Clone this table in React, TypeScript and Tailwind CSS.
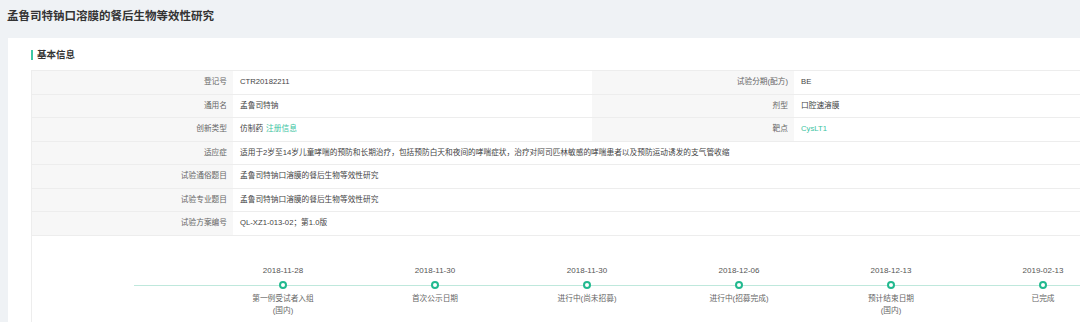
import React from 'react'

const font = { fontFamily: '"Liberation Sans", "Noto Sans CJK SC", sans-serif' }

interface Milestone {
  date: string
  label: string[]
}

const milestones: Milestone[] = [
  { date: '2018-11-28', label: ['第一例受试者入组', '(国内)'] },
  { date: '2018-11-30', label: ['首次公示日期'] },
  { date: '2018-11-30', label: ['进行中(尚未招募)'] },
  { date: '2018-12-06', label: ['进行中(招募完成)'] },
  { date: '2018-12-13', label: ['预计结束日期', '(国内)'] },
  { date: '2019-02-13', label: ['已完成'] },
]

function Label({ children }: { children: React.ReactNode }) {
  return (
    <div className="h-[23.5px] bg-[#f7f7f7] border-b border-[#ededed] flex items-center justify-end pr-[6px] text-[7.7px] text-[#666]">
      {children}
    </div>
  )
}

function Value({ children }: { children: React.ReactNode }) {
  return (
    <div className="h-[23.5px] bg-white border-b border-[#ededed] flex items-center pl-[7px] text-[7.7px] text-[#444] whitespace-nowrap overflow-hidden">
      {children}
    </div>
  )
}

export default function App() {
  return (
    <div className="w-[1080px] h-[322px] overflow-hidden bg-[#eff2f5]" style={font}>
      {/* Title */}
      <div className="h-[38px] flex items-center pl-[7px] pb-[4px]">
        <h1 className="text-[11.5px] font-bold text-[#333] whitespace-nowrap">孟鲁司特钠口溶膜的餐后生物等效性研究</h1>
      </div>

      {/* Card */}
      <div className="ml-[8px] w-[1160px] h-[284px] bg-white pt-[11px] pl-[23px]">
        <div className="h-[12px] flex items-center gap-[4px]">
          <span className="w-[2px] h-[10px] bg-[#3cc8a5]" />
          <span className="text-[9.5px] font-bold text-[#333]">基本信息</span>
        </div>

        <div className="mt-[9px] border-t border-l border-[#ededed] w-[1120px]">
          <div className="grid grid-cols-[201px_359px_202px_1fr]">
            <Label>登记号</Label>
            <Value>CTR20182211</Value>
            <Label>试验分期(配方)</Label>
            <Value>BE</Value>
            <Label>通用名</Label>
            <Value>孟鲁司特钠</Value>
            <Label>剂型</Label>
            <Value>口腔速溶膜</Value>
            <Label>创新类型</Label>
            <Value>
              仿制药<span className="ml-[3px] text-[#3cc4a2]">注册信息</span>
            </Value>
            <Label>靶点</Label>
            <Value>
              <span className="text-[#3cc4a2]">CysLT1</span>
            </Value>
          </div>
          <div className="grid grid-cols-[201px_1fr]">
            <Label>适应症</Label>
            <Value>适用于2岁至14岁儿童哮喘的预防和长期治疗，包括预防白天和夜间的哮喘症状，治疗对阿司匹林敏感的哮喘患者以及预防运动诱发的支气管收缩</Value>
            <Label>试验通俗题目</Label>
            <Value>孟鲁司特钠口溶膜的餐后生物等效性研究</Value>
            <Label>试验专业题目</Label>
            <Value>孟鲁司特钠口溶膜的餐后生物等效性研究</Value>
            <Label>试验方案编号</Label>
            <Value>QL-XZ1-013-02；第1.0版</Value>
          </div>

          {/* Timeline */}
          <div className="pt-[29px] pl-[102px] flex h-[100px]">
            <div className="w-[73px] shrink-0 pt-[16px]">
              <div className="h-[9px] flex items-center">
                <div className="w-full h-px bg-[#bfe8dc]" />
              </div>
            </div>
            {milestones.map((m, i) => (
              <div key={i} className="w-[152px] shrink-0 flex flex-col items-center">
                <div className="h-[12px] leading-[12px] text-[8px] text-[#555]">{m.date}</div>
                <div className="relative mt-[4px] h-[9px] w-full flex items-center justify-center">
                  <div className="absolute inset-x-0 top-[4px] h-px bg-[#bfe8dc]" />
                  <div className="relative w-[8px] h-[8px] rounded-full border-2 border-[#22b98f] bg-white" />
                </div>
                <div className="mt-[3px] flex flex-col items-center">
                  {m.label.map((l, j) => (
                    <span key={j} className="leading-[12px] text-[7.7px] text-[#666]">{l}</span>
                  ))}
                </div>
              </div>
            ))}
          </div>
        </div>
      </div>
    </div>
  )
}
